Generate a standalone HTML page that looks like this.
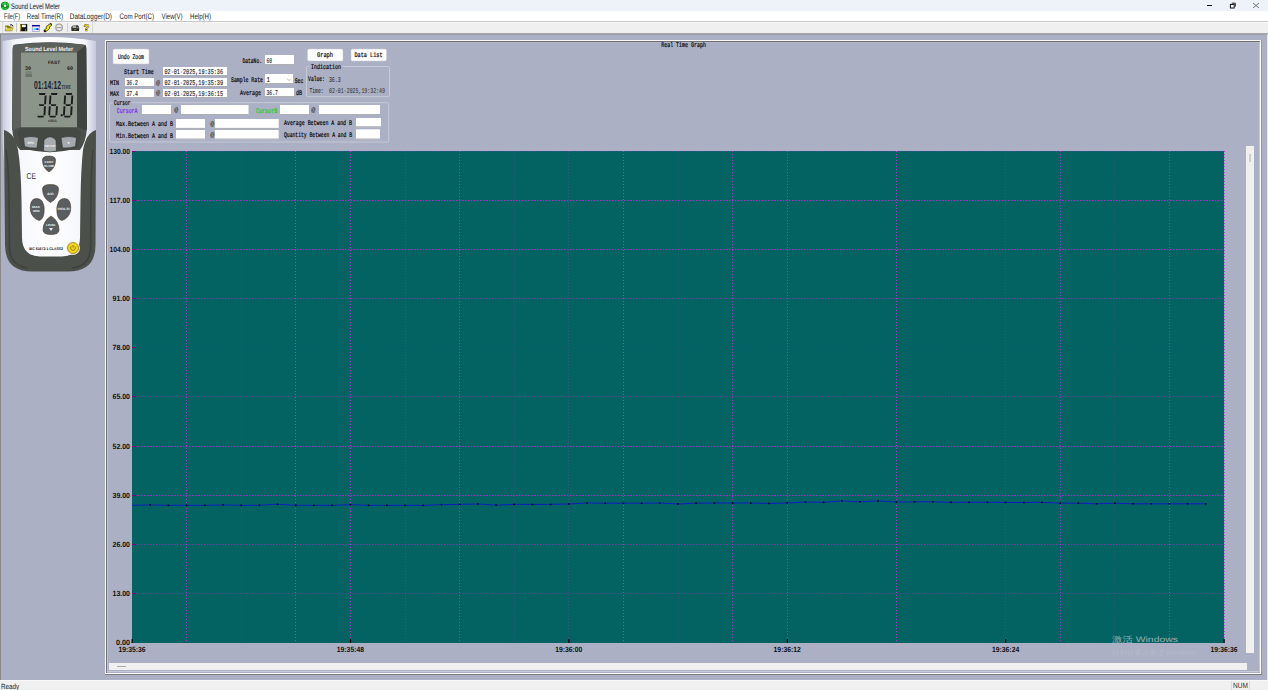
<!DOCTYPE html>
<html><head><meta charset="utf-8"><style>html,body{margin:0;padding:0;background:#abb0c4;overflow:hidden}svg{display:block}</style></head>
<body><svg width="1268" height="690" viewBox="0 0 1268 690" text-rendering="geometricPrecision">
<rect x="0" y="0" width="1268" height="11" fill="#eef2f9" />
<rect x="0" y="11" width="1268" height="10" fill="#ffffff" />
<rect x="0" y="21" width="1268" height="1" fill="#c8c8c8" />
<rect x="0" y="22" width="1268" height="1" fill="#f8f8f8" />
<rect x="0" y="23" width="1268" height="10" fill="#f0f0f0" />
<rect x="0" y="33" width="1268" height="1" fill="#a6a6a6" />
<rect x="0" y="34" width="1268" height="646" fill="#abb0c4" />
<rect x="0" y="34" width="1268" height="1" fill="#9ca0b2" />
<rect x="0" y="34" width="1" height="646" fill="#8a8a8a" />
<rect x="1267" y="34" width="1" height="646" fill="#e8e8ee" />
<rect x="0" y="680" width="1268" height="10" fill="#f0f0f0" />
<rect x="0" y="680" width="1268" height="1" fill="#f8f8f8" />
<g transform="translate(5,5.8)"><circle r="4.1" fill="#0c8a1c"/><path d="M-3 -1 A3.2 3.2 0 0 1 2.5 -2.2 L1.2 -0.3 L3.6 0.3 L3.4 -2.6" fill="#30e040"/><path d="M3 1.3 A3.2 3.2 0 0 1 -1.6 3.2 L-0.6 1.3 L-3.2 1.5 L-2.6 3.6" fill="#20d030"/><circle r="1.2" fill="#f0fff0"/></g>
<text x="11.00" y="8.68" font-family="Liberation Sans" font-size="8" font-weight="normal" fill="#111" textLength="49.00" lengthAdjust="spacingAndGlyphs" opacity="1" >Sound Level Meter</text>
<rect x="1207" y="5" width="5" height="1" fill="#111" />
<path d="M1231.8 3.2 L1235.3 3.2 L1235.3 6.6" stroke="#111" stroke-width="0.9" fill="none"/><rect x="1230.4" y="4.4" width="3.8" height="3.6" fill="#fff" stroke="#111" stroke-width="1"/>
<path d="M1253 3 L1259 8 M1259 3 L1253 8" stroke="#555" stroke-width="0.8"/>
<text x="4.00" y="19.08" font-family="Liberation Sans" font-size="8" font-weight="normal" fill="#222" textLength="16.00" lengthAdjust="spacingAndGlyphs" opacity="1" >File(F)</text>
<text x="26.70" y="19.08" font-family="Liberation Sans" font-size="8" font-weight="normal" fill="#222" textLength="36.30" lengthAdjust="spacingAndGlyphs" opacity="1" >Real Time(R)</text>
<text x="69.80" y="19.08" font-family="Liberation Sans" font-size="8" font-weight="normal" fill="#222" textLength="42.20" lengthAdjust="spacingAndGlyphs" opacity="1" >DataLogger(D)</text>
<text x="119.60" y="19.08" font-family="Liberation Sans" font-size="8" font-weight="normal" fill="#222" textLength="34.40" lengthAdjust="spacingAndGlyphs" opacity="1" >Com Port(C)</text>
<text x="161.60" y="19.08" font-family="Liberation Sans" font-size="8" font-weight="normal" fill="#222" textLength="21.00" lengthAdjust="spacingAndGlyphs" opacity="1" >View(V)</text>
<text x="190.00" y="19.08" font-family="Liberation Sans" font-size="8" font-weight="normal" fill="#222" textLength="21.00" lengthAdjust="spacingAndGlyphs" opacity="1" >Help(H)</text>
<rect x="2" y="22" width="1" height="11" fill="#dcdcdc" />
<rect x="16" y="23" width="1" height="9" fill="#c4c4c4" />
<rect x="67" y="23" width="1" height="9" fill="#d0d0d0" />
<rect x="92" y="22" width="1" height="11" fill="#d8d8d8" />
<path d="M5 25.5 L8.5 25.5 L9.5 26.5 L11.5 26.5 L11.5 30.8 L5 30.8 Z" fill="#7a7a00"/><path d="M6 27.8 L13.2 27.8 L11.8 31 L5.2 31 Z" fill="#d8d048" stroke="#606000" stroke-width="0.4"/><path d="M5.5 26 L7.5 28 L5.5 30 Z" fill="#f0f080"/><path d="M10 25 Q12.5 23.8 13 26.5" stroke="#111" stroke-width="0.9" fill="none"/>
<rect x="20" y="24" width="7.2" height="7.2" rx="0.5" fill="#101010"/><rect x="21.8" y="24.6" width="4" height="2.6" fill="#f4f4f4"/><rect x="20" y="24.3" width="1.1" height="6.5" fill="#a8a000"/><rect x="25" y="29.5" width="1" height="1" fill="#ddd"/>
<rect x="32.3" y="25.3" width="7.3" height="6.2" fill="#ece8f8" stroke="#a098d8" stroke-width="0.7"/><rect x="32" y="25" width="7.8" height="1.4" fill="#000090"/><rect x="33.6" y="28.2" width="2.6" height="1.8" fill="#20e8e8"/><rect x="36.2" y="28.2" width="2.4" height="1.8" fill="#1838f0"/>
<path d="M50.6 24.6 L47.2 27.4 L48.6 28 L45 30.8" stroke="#202000" stroke-width="2.8" fill="none" stroke-linejoin="round" stroke-linecap="round"/><path d="M50.6 24.6 L47.2 27.4 L48.6 28 L45.6 30.3" stroke="#f4f000" stroke-width="1.6" fill="none" stroke-linejoin="round"/>
<circle cx="59.1" cy="27.5" r="3.3" fill="none" stroke="#a4a4a4" stroke-width="1.3"/><rect x="56.6" y="26.9" width="5" height="1.3" fill="#a4a4a4"/>
<path d="M71.2 27.5 Q71.5 25.5 74 25.5 L78 25.2 Q79.2 26.5 79.2 28.5 L79 31 L71.5 31 Z" fill="#2c2c2c"/><rect x="72.5" y="25.5" width="3.6" height="2.6" fill="#a8a8a8"/><rect x="73.8" y="29.3" width="2.4" height="0.9" fill="#909020"/><rect x="76.5" y="26.8" width="2" height="1.4" fill="#888"/>
<text x="83.8" y="31.3" font-family="Liberation Sans" font-weight="bold" font-size="9.5" fill="#e8e000" stroke="#222" stroke-width="0.7" paint-order="stroke" textLength="5.5" lengthAdjust="spacingAndGlyphs">?</text>
<rect x="105" y="40" width="1157" height="1" fill="#f6f6f8" />
<rect x="105" y="40" width="1" height="635" fill="#ffffff" />
<rect x="106" y="41" width="1154" height="1" fill="#6e6e6e" />
<rect x="106" y="41" width="1" height="632" fill="#6e6e6e" />
<rect x="107" y="42" width="1152" height="1" fill="#b2b6c8" />
<rect x="107" y="42" width="1" height="630" fill="#c4c7d6" />
<rect x="1260" y="41" width="1" height="633" fill="#ffffff" />
<rect x="106" y="673" width="1155" height="1" fill="#ffffff" />
<rect x="1261" y="40" width="1" height="635" fill="#9496a2" />
<rect x="105" y="674" width="1157" height="1" fill="#7c7c82" />
<rect x="108" y="671" width="1151" height="1" fill="#c8cad8" />
<rect x="1259" y="42" width="1" height="630" fill="#c4c8d6" />
<text x="661.20" y="46.82" font-family="Liberation Mono" font-size="7" font-weight="normal" fill="#000" textLength="44.80" lengthAdjust="spacingAndGlyphs" opacity="1" stroke="#000" stroke-width="0.18">Real Time Graph</text>
<rect x="113" y="49" width="36" height="15" rx="1.5" fill="#fdfdfd" stroke="#c8c8d0" stroke-width="0.5"/>
<text x="118.00" y="58.72" font-family="Liberation Mono" font-size="7" font-weight="normal" fill="#000" textLength="26.00" lengthAdjust="spacingAndGlyphs" opacity="1" stroke="#000" stroke-width="0.18">Undo Zoom</text>
<rect x="307.5" y="49" width="35.5" height="12" rx="1.5" fill="#fdfdfd" stroke="#c8c8d0" stroke-width="0.5"/>
<text x="317.00" y="57.22" font-family="Liberation Mono" font-size="7" font-weight="normal" fill="#000" textLength="16.00" lengthAdjust="spacingAndGlyphs" opacity="1" stroke="#000" stroke-width="0.18">Graph</text>
<rect x="351" y="49" width="35.5" height="12" rx="1.5" fill="#fdfdfd" stroke="#c8c8d0" stroke-width="0.5"/>
<text x="354.50" y="57.22" font-family="Liberation Mono" font-size="7" font-weight="normal" fill="#000" textLength="28.00" lengthAdjust="spacingAndGlyphs" opacity="1" stroke="#000" stroke-width="0.18">Data List</text>
<rect x="265" y="55" width="29" height="10" fill="#ffffff"/>
<rect x="265" y="64.2" width="29" height="0.8" fill="#9a9aa0"/>
<text x="266.50" y="62.70" font-family="Liberation Mono" font-size="7.5" font-weight="normal" fill="#202020" textLength="5.50" lengthAdjust="spacingAndGlyphs" opacity="1" stroke="#303030" stroke-width="0.15">60</text>
<rect x="163" y="67" width="64" height="9" fill="#ffffff"/>
<rect x="163" y="75.2" width="64" height="0.8" fill="#9a9aa0"/>
<text x="164.50" y="74.20" font-family="Liberation Mono" font-size="7.5" font-weight="normal" fill="#202020" textLength="58.50" lengthAdjust="spacingAndGlyphs" opacity="1" stroke="#303030" stroke-width="0.15">02-01-2025,19:35:36</text>
<rect x="125" y="78" width="29" height="9" fill="#ffffff"/>
<rect x="125" y="86.2" width="29" height="0.8" fill="#9a9aa0"/>
<text x="126.50" y="85.20" font-family="Liberation Mono" font-size="7.5" font-weight="normal" fill="#202020" textLength="11.50" lengthAdjust="spacingAndGlyphs" opacity="1" stroke="#303030" stroke-width="0.15">36.2</text>
<rect x="163" y="78" width="64" height="9" fill="#ffffff"/>
<rect x="163" y="86.2" width="64" height="0.8" fill="#9a9aa0"/>
<text x="164.50" y="85.20" font-family="Liberation Mono" font-size="7.5" font-weight="normal" fill="#202020" textLength="58.50" lengthAdjust="spacingAndGlyphs" opacity="1" stroke="#303030" stroke-width="0.15">02-01-2025,19:35:39</text>
<rect x="125" y="89" width="29" height="9" fill="#ffffff"/>
<rect x="125" y="97.2" width="29" height="0.8" fill="#9a9aa0"/>
<text x="126.50" y="96.20" font-family="Liberation Mono" font-size="7.5" font-weight="normal" fill="#202020" textLength="11.50" lengthAdjust="spacingAndGlyphs" opacity="1" stroke="#303030" stroke-width="0.15">37.4</text>
<rect x="163" y="89" width="64" height="9" fill="#ffffff"/>
<rect x="163" y="97.2" width="64" height="0.8" fill="#9a9aa0"/>
<text x="164.50" y="96.20" font-family="Liberation Mono" font-size="7.5" font-weight="normal" fill="#202020" textLength="58.50" lengthAdjust="spacingAndGlyphs" opacity="1" stroke="#303030" stroke-width="0.15">02-01-2025,19:36:15</text>
<rect x="265" y="74" width="28" height="10" fill="#ffffff"/>
<rect x="265" y="83.2" width="28" height="0.8" fill="#9a9aa0"/>
<text x="266.50" y="81.70" font-family="Liberation Mono" font-size="7.5" font-weight="normal" fill="#202020" textLength="3.50" lengthAdjust="spacingAndGlyphs" opacity="1" stroke="#303030" stroke-width="0.15">1</text>
<path d="M287 78.6 L289 80.6 L291 78.6" stroke="#888" stroke-width="0.6" fill="none"/>
<rect x="265" y="88" width="29" height="9" fill="#ffffff"/>
<rect x="265" y="96.2" width="29" height="0.8" fill="#9a9aa0"/>
<text x="266.50" y="95.20" font-family="Liberation Mono" font-size="7.5" font-weight="normal" fill="#202020" textLength="11.50" lengthAdjust="spacingAndGlyphs" opacity="1" stroke="#303030" stroke-width="0.15">36.7</text>
<rect x="142" y="105" width="29" height="10" fill="#ffffff"/>
<rect x="142" y="114.2" width="29" height="0.8" fill="#9a9aa0"/>
<rect x="181" y="105" width="67.5" height="10" fill="#ffffff"/>
<rect x="181" y="114.2" width="67.5" height="0.8" fill="#9a9aa0"/>
<rect x="280" y="105" width="29" height="10" fill="#ffffff"/>
<rect x="280" y="114.2" width="29" height="0.8" fill="#9a9aa0"/>
<rect x="319" y="105" width="61" height="10" fill="#ffffff"/>
<rect x="319" y="114.2" width="61" height="0.8" fill="#9a9aa0"/>
<rect x="176" y="119" width="29" height="9.699999999999989" fill="#ffffff"/>
<rect x="176" y="127.89999999999999" width="29" height="0.8" fill="#9a9aa0"/>
<rect x="215" y="119" width="63.69999999999999" height="9.699999999999989" fill="#ffffff"/>
<rect x="215" y="127.89999999999999" width="63.69999999999999" height="0.8" fill="#9a9aa0"/>
<rect x="176" y="130" width="29" height="9.400000000000006" fill="#ffffff"/>
<rect x="176" y="138.6" width="29" height="0.8" fill="#9a9aa0"/>
<rect x="215" y="130" width="63.69999999999999" height="9.400000000000006" fill="#ffffff"/>
<rect x="215" y="138.6" width="63.69999999999999" height="0.8" fill="#9a9aa0"/>
<rect x="356" y="118" width="25" height="9.200000000000003" fill="#ffffff"/>
<rect x="356" y="126.4" width="25" height="0.8" fill="#9a9aa0"/>
<rect x="356" y="129.3" width="24" height="10.099999999999994" fill="#ffffff"/>
<rect x="356" y="138.6" width="24" height="0.8" fill="#9a9aa0"/>
<text x="124.00" y="74.32" font-family="Liberation Mono" font-size="7" font-weight="normal" fill="#000" textLength="29.70" lengthAdjust="spacingAndGlyphs" opacity="1" stroke="#000" stroke-width="0.18">Start Time</text>
<text x="110.00" y="85.32" font-family="Liberation Mono" font-size="7" font-weight="normal" fill="#000" textLength="9.00" lengthAdjust="spacingAndGlyphs" opacity="1" stroke="#000" stroke-width="0.18">MIN</text>
<text x="110.00" y="95.82" font-family="Liberation Mono" font-size="7" font-weight="normal" fill="#000" textLength="9.00" lengthAdjust="spacingAndGlyphs" opacity="1" stroke="#000" stroke-width="0.18">MAX</text>
<text x="156.00" y="85.14" font-family="Liberation Mono" font-size="6.5" font-weight="normal" fill="#222" textLength="4.00" lengthAdjust="spacingAndGlyphs" opacity="1" >@</text>
<text x="156.00" y="95.34" font-family="Liberation Mono" font-size="6.5" font-weight="normal" fill="#222" textLength="4.00" lengthAdjust="spacingAndGlyphs" opacity="1" >@</text>
<text x="242.40" y="62.52" font-family="Liberation Mono" font-size="7" font-weight="normal" fill="#000" textLength="19.60" lengthAdjust="spacingAndGlyphs" opacity="1" stroke="#000" stroke-width="0.18">DataNo.</text>
<text x="231.00" y="81.72" font-family="Liberation Mono" font-size="7" font-weight="normal" fill="#000" textLength="32.00" lengthAdjust="spacingAndGlyphs" opacity="1" stroke="#000" stroke-width="0.18">Sample Rate</text>
<text x="294.70" y="82.52" font-family="Liberation Mono" font-size="7" font-weight="normal" fill="#000" textLength="8.70" lengthAdjust="spacingAndGlyphs" opacity="1" stroke="#000" stroke-width="0.18">Sec</text>
<text x="240.00" y="94.72" font-family="Liberation Mono" font-size="7" font-weight="normal" fill="#000" textLength="21.00" lengthAdjust="spacingAndGlyphs" opacity="1" stroke="#000" stroke-width="0.18">Average</text>
<text x="296.00" y="94.52" font-family="Liberation Mono" font-size="7" font-weight="normal" fill="#000" textLength="6.00" lengthAdjust="spacingAndGlyphs" opacity="1" stroke="#000" stroke-width="0.18">dB</text>
<rect x="306.5" y="66.5" width="83.0" height="30.200000000000003" rx="1" fill="none" stroke="#cdd0dc" stroke-width="0.8"/>
<rect x="309.5" y="64.5" width="33" height="4" fill="#abb0c4" />
<text x="311.00" y="69.02" font-family="Liberation Mono" font-size="7" font-weight="normal" fill="#000" textLength="30.00" lengthAdjust="spacingAndGlyphs" opacity="1" stroke="#000" stroke-width="0.18">Indication</text>
<rect x="109.5" y="102.7" width="279.2" height="39.3" rx="1" fill="none" stroke="#cdd0dc" stroke-width="0.8"/>
<rect x="112.5" y="100.7" width="19.400000000000006" height="4" fill="#abb0c4" />
<text x="114.00" y="105.22" font-family="Liberation Mono" font-size="7" font-weight="normal" fill="#000" textLength="16.40" lengthAdjust="spacingAndGlyphs" opacity="1" stroke="#000" stroke-width="0.18">Cursor</text>
<text x="308.10" y="81.32" font-family="Liberation Mono" font-size="7" font-weight="normal" fill="#000" textLength="16.80" lengthAdjust="spacingAndGlyphs" opacity="1" stroke="#000" stroke-width="0.18">Value:</text>
<text x="328.90" y="81.50" font-family="Liberation Mono" font-size="7.5" font-weight="normal" fill="#202020" textLength="11.70" lengthAdjust="spacingAndGlyphs" opacity="1" >36.3</text>
<text x="309.50" y="93.00" font-family="Liberation Mono" font-size="7.5" font-weight="normal" fill="#202020" textLength="14.00" lengthAdjust="spacingAndGlyphs" opacity="1" >Time:</text>
<text x="329.00" y="93.00" font-family="Liberation Mono" font-size="7.5" font-weight="normal" fill="#303030" textLength="56.00" lengthAdjust="spacingAndGlyphs" opacity="1" >02-01-2025,19:32:49</text>
<text x="116.80" y="112.92" font-family="Liberation Mono" font-size="7" font-weight="normal" fill="#7a1cf0" textLength="20.70" lengthAdjust="spacingAndGlyphs" opacity="1" stroke="#7a1cf0" stroke-width="0.18">CursorA</text>
<text x="174.20" y="111.94" font-family="Liberation Mono" font-size="6.5" font-weight="normal" fill="#222" textLength="4.00" lengthAdjust="spacingAndGlyphs" opacity="1" >@</text>
<text x="256.00" y="112.92" font-family="Liberation Mono" font-size="7" font-weight="normal" fill="#10d010" textLength="21.20" lengthAdjust="spacingAndGlyphs" opacity="1" stroke="#10d010" stroke-width="0.18">CursorB</text>
<text x="311.20" y="111.94" font-family="Liberation Mono" font-size="6.5" font-weight="normal" fill="#222" textLength="4.20" lengthAdjust="spacingAndGlyphs" opacity="1" >@</text>
<text x="116.00" y="126.22" font-family="Liberation Mono" font-size="7" font-weight="normal" fill="#000" textLength="57.00" lengthAdjust="spacingAndGlyphs" opacity="1" stroke="#000" stroke-width="0.18">Max.Between A and B</text>
<text x="210.30" y="125.54" font-family="Liberation Mono" font-size="6.5" font-weight="normal" fill="#222" textLength="4.00" lengthAdjust="spacingAndGlyphs" opacity="1" >@</text>
<text x="116.00" y="137.72" font-family="Liberation Mono" font-size="7" font-weight="normal" fill="#000" textLength="57.00" lengthAdjust="spacingAndGlyphs" opacity="1" stroke="#000" stroke-width="0.18">Min.Between A and B</text>
<text x="210.30" y="136.74" font-family="Liberation Mono" font-size="6.5" font-weight="normal" fill="#222" textLength="4.00" lengthAdjust="spacingAndGlyphs" opacity="1" >@</text>
<text x="284.00" y="124.72" font-family="Liberation Mono" font-size="7" font-weight="normal" fill="#000" textLength="68.00" lengthAdjust="spacingAndGlyphs" opacity="1" stroke="#000" stroke-width="0.18">Average Between A and B</text>
<text x="284.00" y="136.52" font-family="Liberation Mono" font-size="7" font-weight="normal" fill="#000" textLength="68.00" lengthAdjust="spacingAndGlyphs" opacity="1" stroke="#000" stroke-width="0.18">Quantity Between A and B</text>
<rect x="132" y="151" width="1092" height="492" fill="#036262" />
<line x1="132" y1="151.5" x2="1224" y2="151.5" stroke="#b830d8" stroke-width="1" stroke-dasharray="1.5 1.5" opacity="0.32"/>
<line x1="132" y1="151.5" x2="136" y2="151.5" stroke="#800080" stroke-width="1"/>
<text x="109.50" y="154.00" font-family="Liberation Sans" font-size="7.5" font-weight="bold" fill="#111" textLength="20.50" lengthAdjust="spacingAndGlyphs" opacity="1" >130.00</text>
<line x1="132" y1="200.5" x2="1224" y2="200.5" stroke="#b830d8" stroke-width="1" stroke-dasharray="1.5 1.5" opacity="0.90"/>
<line x1="132" y1="200.5" x2="136" y2="200.5" stroke="#800080" stroke-width="1"/>
<text x="109.50" y="203.00" font-family="Liberation Sans" font-size="7.5" font-weight="bold" fill="#111" textLength="20.50" lengthAdjust="spacingAndGlyphs" opacity="1" >117.00</text>
<line x1="132" y1="249.5" x2="1224" y2="249.5" stroke="#b830d8" stroke-width="1" stroke-dasharray="1.5 1.5" opacity="0.85"/>
<line x1="132" y1="249.5" x2="136" y2="249.5" stroke="#800080" stroke-width="1"/>
<text x="109.50" y="252.00" font-family="Liberation Sans" font-size="7.5" font-weight="bold" fill="#111" textLength="20.50" lengthAdjust="spacingAndGlyphs" opacity="1" >104.00</text>
<line x1="132" y1="298.5" x2="1224" y2="298.5" stroke="#b830d8" stroke-width="1" stroke-dasharray="1.5 1.5" opacity="0.54"/>
<line x1="132" y1="298.5" x2="136" y2="298.5" stroke="#800080" stroke-width="1"/>
<text x="112.50" y="301.00" font-family="Liberation Sans" font-size="7.5" font-weight="bold" fill="#111" textLength="17.50" lengthAdjust="spacingAndGlyphs" opacity="1" >91.00</text>
<line x1="132" y1="347.5" x2="1224" y2="347.5" stroke="#b830d8" stroke-width="1" stroke-dasharray="1.5 1.5" opacity="0.04"/>
<line x1="132" y1="347.5" x2="136" y2="347.5" stroke="#800080" stroke-width="1"/>
<text x="112.50" y="350.00" font-family="Liberation Sans" font-size="7.5" font-weight="bold" fill="#111" textLength="17.50" lengthAdjust="spacingAndGlyphs" opacity="1" >78.00</text>
<line x1="132" y1="396.5" x2="1224" y2="396.5" stroke="#b830d8" stroke-width="1" stroke-dasharray="1.5 1.5" opacity="0.45"/>
<line x1="132" y1="396.5" x2="136" y2="396.5" stroke="#800080" stroke-width="1"/>
<text x="112.50" y="399.00" font-family="Liberation Sans" font-size="7.5" font-weight="bold" fill="#111" textLength="17.50" lengthAdjust="spacingAndGlyphs" opacity="1" >65.00</text>
<line x1="132" y1="446.5" x2="1224" y2="446.5" stroke="#b830d8" stroke-width="1" stroke-dasharray="1.5 1.5" opacity="0.85"/>
<line x1="132" y1="446.5" x2="136" y2="446.5" stroke="#800080" stroke-width="1"/>
<text x="112.50" y="449.00" font-family="Liberation Sans" font-size="7.5" font-weight="bold" fill="#111" textLength="17.50" lengthAdjust="spacingAndGlyphs" opacity="1" >52.00</text>
<line x1="132" y1="495.5" x2="1224" y2="495.5" stroke="#b830d8" stroke-width="1" stroke-dasharray="1.5 1.5" opacity="0.85"/>
<line x1="132" y1="495.5" x2="136" y2="495.5" stroke="#800080" stroke-width="1"/>
<text x="112.50" y="498.00" font-family="Liberation Sans" font-size="7.5" font-weight="bold" fill="#111" textLength="17.50" lengthAdjust="spacingAndGlyphs" opacity="1" >39.00</text>
<line x1="132" y1="544.5" x2="1224" y2="544.5" stroke="#b830d8" stroke-width="1" stroke-dasharray="1.5 1.5" opacity="0.54"/>
<line x1="132" y1="544.5" x2="136" y2="544.5" stroke="#800080" stroke-width="1"/>
<text x="112.50" y="547.00" font-family="Liberation Sans" font-size="7.5" font-weight="bold" fill="#111" textLength="17.50" lengthAdjust="spacingAndGlyphs" opacity="1" >26.00</text>
<line x1="132" y1="593.5" x2="1224" y2="593.5" stroke="#b830d8" stroke-width="1" stroke-dasharray="1.5 1.5" opacity="0.36"/>
<line x1="132" y1="593.5" x2="136" y2="593.5" stroke="#800080" stroke-width="1"/>
<text x="112.50" y="596.00" font-family="Liberation Sans" font-size="7.5" font-weight="bold" fill="#111" textLength="17.50" lengthAdjust="spacingAndGlyphs" opacity="1" >13.00</text>
<text x="116.00" y="645.00" font-family="Liberation Sans" font-size="7.5" font-weight="bold" fill="#111" textLength="14.00" lengthAdjust="spacingAndGlyphs" opacity="1" >0.00</text>
<line x1="186.5" y1="151" x2="186.5" y2="642" stroke="#d02ce8" stroke-width="1" stroke-dasharray="1 2" opacity="0.90"/>
<line x1="241.5" y1="151" x2="241.5" y2="642" stroke="#d02ce8" stroke-width="1" stroke-dasharray="1 2" opacity="0.20"/>
<line x1="295.5" y1="151" x2="295.5" y2="642" stroke="#d02ce8" stroke-width="1" stroke-dasharray="1 2" opacity="0.90"/>
<line x1="350.5" y1="151" x2="350.5" y2="642" stroke="#d02ce8" stroke-width="1" stroke-dasharray="1 2" opacity="0.85"/>
<line x1="405.5" y1="151" x2="405.5" y2="642" stroke="#d02ce8" stroke-width="1" stroke-dasharray="1 2" opacity="0.32"/>
<line x1="459.5" y1="151" x2="459.5" y2="642" stroke="#d02ce8" stroke-width="1" stroke-dasharray="1 2" opacity="0.81"/>
<line x1="514.5" y1="151" x2="514.5" y2="642" stroke="#d02ce8" stroke-width="1" stroke-dasharray="1 2" opacity="0.23"/>
<line x1="568.5" y1="151" x2="568.5" y2="642" stroke="#d02ce8" stroke-width="1" stroke-dasharray="1 2" opacity="0.27"/>
<line x1="623.5" y1="151" x2="623.5" y2="642" stroke="#d02ce8" stroke-width="1" stroke-dasharray="1 2" opacity="0.85"/>
<line x1="678.5" y1="151" x2="678.5" y2="642" stroke="#d02ce8" stroke-width="1" stroke-dasharray="1 2" opacity="0.18"/>
<line x1="732.5" y1="151" x2="732.5" y2="642" stroke="#d02ce8" stroke-width="1" stroke-dasharray="1 2" opacity="0.77"/>
<line x1="787.5" y1="151" x2="787.5" y2="642" stroke="#d02ce8" stroke-width="1" stroke-dasharray="1 2" opacity="0.77"/>
<line x1="841.5" y1="151" x2="841.5" y2="642" stroke="#d02ce8" stroke-width="1" stroke-dasharray="1 2" opacity="0.11"/>
<line x1="896.5" y1="151" x2="896.5" y2="642" stroke="#d02ce8" stroke-width="1" stroke-dasharray="1 2" opacity="0.90"/>
<line x1="951.5" y1="151" x2="951.5" y2="642" stroke="#d02ce8" stroke-width="1" stroke-dasharray="1 2" opacity="0.05"/>
<line x1="1005.5" y1="151" x2="1005.5" y2="642" stroke="#d02ce8" stroke-width="1" stroke-dasharray="1 2" opacity="0.25"/>
<line x1="1060.5" y1="151" x2="1060.5" y2="642" stroke="#d02ce8" stroke-width="1" stroke-dasharray="1 2" opacity="0.77"/>
<line x1="1114.5" y1="151" x2="1114.5" y2="642" stroke="#d02ce8" stroke-width="1" stroke-dasharray="1 2" opacity="0.18"/>
<line x1="1169.5" y1="151" x2="1169.5" y2="642" stroke="#d02ce8" stroke-width="1" stroke-dasharray="1 2" opacity="0.77"/>
<line x1="1224.5" y1="151" x2="1224.5" y2="642" stroke="#d02ce8" stroke-width="1" stroke-dasharray="1 2" opacity="0.90"/>
<rect x="131.5" y="639" width="1.2" height="4" fill="#000"/>
<text x="118.40" y="652.00" font-family="Liberation Sans" font-size="7.5" font-weight="bold" fill="#111" textLength="27.20" lengthAdjust="spacingAndGlyphs" opacity="1" >19:35:36</text>
<rect x="349.9" y="639" width="1.2" height="4" fill="#000"/>
<text x="336.80" y="652.00" font-family="Liberation Sans" font-size="7.5" font-weight="bold" fill="#111" textLength="27.20" lengthAdjust="spacingAndGlyphs" opacity="1" >19:35:48</text>
<rect x="568.3" y="639" width="1.2" height="4" fill="#000"/>
<text x="555.20" y="652.00" font-family="Liberation Sans" font-size="7.5" font-weight="bold" fill="#111" textLength="27.20" lengthAdjust="spacingAndGlyphs" opacity="1" >19:36:00</text>
<rect x="786.7" y="639" width="1.2" height="4" fill="#000"/>
<text x="773.60" y="652.00" font-family="Liberation Sans" font-size="7.5" font-weight="bold" fill="#111" textLength="27.20" lengthAdjust="spacingAndGlyphs" opacity="1" >19:36:12</text>
<rect x="1005.1" y="639" width="1.2" height="4" fill="#000"/>
<text x="992.00" y="652.00" font-family="Liberation Sans" font-size="7.5" font-weight="bold" fill="#111" textLength="27.20" lengthAdjust="spacingAndGlyphs" opacity="1" >19:36:24</text>
<rect x="1223.5" y="639" width="1.2" height="4" fill="#000"/>
<text x="1210.40" y="652.00" font-family="Liberation Sans" font-size="7.5" font-weight="bold" fill="#111" textLength="27.20" lengthAdjust="spacingAndGlyphs" opacity="1" >19:36:36</text>
<path d="M132.0 505.3 L150.2 504.9 L168.4 505.3 L186.6 505.3 L204.8 505.3 L223.0 504.9 L241.2 505.3 L259.4 505.3 L277.6 504.2 L295.8 505.3 L314.0 505.3 L332.2 505.3 L350.4 504.7 L368.6 505.3 L386.8 505.3 L405.0 505.3 L423.2 505.4 L441.4 504.7 L459.6 504.4 L477.8 504.0 L496.0 505.1 L514.2 504.4 L532.4 504.4 L550.6 504.4 L568.8 504.0 L587.0 503.0 L605.2 503.2 L623.4 503.2 L641.6 503.2 L659.8 503.0 L678.0 504.0 L696.2 503.2 L714.4 503.0 L732.6 503.0 L750.8 503.0 L769.0 503.5 L787.2 503.0 L805.4 502.0 L823.6 502.3 L841.8 500.9 L860.0 501.8 L878.2 500.9 L896.4 502.0 L914.6 501.8 L932.8 501.8 L951.0 502.3 L969.2 502.3 L987.4 502.3 L1005.6 502.4 L1023.8 502.5 L1042.0 502.3 L1060.2 503.2 L1078.4 503.2 L1096.6 503.8 L1114.8 503.2 L1133.0 503.8 L1151.2 503.8 L1169.4 503.8 L1187.6 503.8 L1205.8 503.8" stroke="#0a20c0" stroke-width="1.0" fill="none"/>
<rect x="149.4" y="504.1" width="1.6" height="1.6" fill="#000" opacity="0.9"/>
<rect x="167.6" y="504.5" width="1.6" height="1.6" fill="#000" opacity="0.9"/>
<rect x="185.8" y="504.5" width="1.6" height="1.6" fill="#000" opacity="0.9"/>
<rect x="204.0" y="504.5" width="1.6" height="1.6" fill="#000" opacity="0.9"/>
<rect x="222.2" y="504.1" width="1.6" height="1.6" fill="#000" opacity="0.9"/>
<rect x="240.4" y="504.5" width="1.6" height="1.6" fill="#000" opacity="0.9"/>
<rect x="258.6" y="504.5" width="1.6" height="1.6" fill="#000" opacity="0.9"/>
<rect x="276.8" y="503.4" width="1.6" height="1.6" fill="#000" opacity="0.9"/>
<rect x="295.0" y="504.5" width="1.6" height="1.6" fill="#000" opacity="0.9"/>
<rect x="313.2" y="504.5" width="1.6" height="1.6" fill="#000" opacity="0.9"/>
<rect x="331.4" y="504.5" width="1.6" height="1.6" fill="#000" opacity="0.9"/>
<rect x="349.6" y="503.9" width="1.6" height="1.6" fill="#000" opacity="0.9"/>
<rect x="367.8" y="504.5" width="1.6" height="1.6" fill="#000" opacity="0.9"/>
<rect x="386.0" y="504.5" width="1.6" height="1.6" fill="#000" opacity="0.9"/>
<rect x="404.2" y="504.5" width="1.6" height="1.6" fill="#000" opacity="0.9"/>
<rect x="422.4" y="504.6" width="1.6" height="1.6" fill="#000" opacity="0.9"/>
<rect x="440.6" y="503.9" width="1.6" height="1.6" fill="#000" opacity="0.9"/>
<rect x="458.8" y="503.6" width="1.6" height="1.6" fill="#000" opacity="0.9"/>
<rect x="477.0" y="503.2" width="1.6" height="1.6" fill="#000" opacity="0.9"/>
<rect x="495.2" y="504.3" width="1.6" height="1.6" fill="#000" opacity="0.9"/>
<rect x="513.4" y="503.6" width="1.6" height="1.6" fill="#000" opacity="0.9"/>
<rect x="531.6" y="503.6" width="1.6" height="1.6" fill="#000" opacity="0.9"/>
<rect x="549.8" y="503.6" width="1.6" height="1.6" fill="#000" opacity="0.9"/>
<rect x="568.0" y="503.2" width="1.6" height="1.6" fill="#000" opacity="0.9"/>
<rect x="586.2" y="502.2" width="1.6" height="1.6" fill="#000" opacity="0.9"/>
<rect x="604.4" y="502.4" width="1.6" height="1.6" fill="#000" opacity="0.9"/>
<rect x="622.6" y="502.4" width="1.6" height="1.6" fill="#000" opacity="0.9"/>
<rect x="640.8" y="502.4" width="1.6" height="1.6" fill="#000" opacity="0.9"/>
<rect x="659.0" y="502.2" width="1.6" height="1.6" fill="#000" opacity="0.9"/>
<rect x="677.2" y="503.2" width="1.6" height="1.6" fill="#000" opacity="0.9"/>
<rect x="695.4" y="502.4" width="1.6" height="1.6" fill="#000" opacity="0.9"/>
<rect x="713.6" y="502.2" width="1.6" height="1.6" fill="#000" opacity="0.9"/>
<rect x="731.8" y="502.2" width="1.6" height="1.6" fill="#000" opacity="0.9"/>
<rect x="750.0" y="502.2" width="1.6" height="1.6" fill="#000" opacity="0.9"/>
<rect x="768.2" y="502.7" width="1.6" height="1.6" fill="#000" opacity="0.9"/>
<rect x="786.4" y="502.2" width="1.6" height="1.6" fill="#000" opacity="0.9"/>
<rect x="804.6" y="501.2" width="1.6" height="1.6" fill="#000" opacity="0.9"/>
<rect x="822.8" y="501.5" width="1.6" height="1.6" fill="#000" opacity="0.9"/>
<rect x="841.0" y="500.1" width="1.6" height="1.6" fill="#000" opacity="0.9"/>
<rect x="859.2" y="501.0" width="1.6" height="1.6" fill="#000" opacity="0.9"/>
<rect x="877.4" y="500.1" width="1.6" height="1.6" fill="#000" opacity="0.9"/>
<rect x="895.6" y="501.2" width="1.6" height="1.6" fill="#000" opacity="0.9"/>
<rect x="913.8" y="501.0" width="1.6" height="1.6" fill="#000" opacity="0.9"/>
<rect x="932.0" y="501.0" width="1.6" height="1.6" fill="#000" opacity="0.9"/>
<rect x="950.2" y="501.5" width="1.6" height="1.6" fill="#000" opacity="0.9"/>
<rect x="968.4" y="501.5" width="1.6" height="1.6" fill="#000" opacity="0.9"/>
<rect x="986.6" y="501.5" width="1.6" height="1.6" fill="#000" opacity="0.9"/>
<rect x="1004.8" y="501.6" width="1.6" height="1.6" fill="#000" opacity="0.9"/>
<rect x="1023.0" y="501.7" width="1.6" height="1.6" fill="#000" opacity="0.9"/>
<rect x="1041.2" y="501.5" width="1.6" height="1.6" fill="#000" opacity="0.9"/>
<rect x="1059.4" y="502.4" width="1.6" height="1.6" fill="#000" opacity="0.9"/>
<rect x="1077.6" y="502.4" width="1.6" height="1.6" fill="#000" opacity="0.9"/>
<rect x="1095.8" y="503.0" width="1.6" height="1.6" fill="#000" opacity="0.9"/>
<rect x="1114.0" y="502.4" width="1.6" height="1.6" fill="#000" opacity="0.9"/>
<rect x="1132.2" y="503.0" width="1.6" height="1.6" fill="#000" opacity="0.9"/>
<rect x="1150.4" y="503.0" width="1.6" height="1.6" fill="#000" opacity="0.9"/>
<rect x="1168.6" y="503.0" width="1.6" height="1.6" fill="#000" opacity="0.9"/>
<rect x="1186.8" y="503.0" width="1.6" height="1.6" fill="#000" opacity="0.9"/>
<rect x="1205.0" y="503.0" width="1.6" height="1.6" fill="#000" opacity="0.9"/>
<rect x="1246" y="146" width="8" height="507" fill="#f0f0f0" />
<rect x="1249.6" y="154" width="0.8" height="8" fill="#9a9a9a" />
<rect x="109" y="663" width="1138" height="7" fill="#f0f0f0" />
<rect x="117" y="666" width="9" height="0.8" fill="#9a9a9a" />
<text x="1112.00" y="642.38" font-family="Liberation Sans" font-size="8" font-weight="normal" fill="#c8c8c8" textLength="66.00" lengthAdjust="spacingAndGlyphs" opacity="0.75" >激活 Windows</text>
<text x="1112.00" y="654.82" font-family="Liberation Sans" font-size="7" font-weight="normal" fill="#c0c2cc" textLength="91.00" lengthAdjust="spacingAndGlyphs" opacity="0.6" >转到设置以激活 Windows。</text>
<text x="1.00" y="688.90" font-family="Liberation Sans" font-size="7.5" font-weight="normal" fill="#222" textLength="18.00" lengthAdjust="spacingAndGlyphs" opacity="1" >Ready</text>
<rect x="1231" y="681" width="0.8" height="9" fill="#d8d8d8" />
<rect x="1249" y="681" width="0.8" height="9" fill="#d8d8d8" />
<text x="1233.00" y="688.30" font-family="Liberation Sans" font-size="7.5" font-weight="normal" fill="#333" textLength="15.00" lengthAdjust="spacingAndGlyphs" opacity="1" >NUM</text>
<defs>
<linearGradient id="bodyG" x1="0" x2="1" y1="0" y2="0">
<stop offset="0" stop-color="#c8cce0"/><stop offset="0.12" stop-color="#f4f6fb"/><stop offset="0.5" stop-color="#ffffff"/><stop offset="0.88" stop-color="#f4f6fb"/><stop offset="1" stop-color="#c4c8dc"/>
</linearGradient>
<linearGradient id="gripG" x1="0" x2="1" y1="0" y2="0">
<stop offset="0" stop-color="#3c403c"/><stop offset="0.5" stop-color="#5a5e5a"/><stop offset="1" stop-color="#3c403c"/>
</linearGradient>
</defs>
<g>
<!-- white body -->
<path d="M2.5 41 Q49 33 96 41 L96 140 Q96 150 95 170 L95 245 Q95 271 68 271 L32 271 Q5 271 5 245 L5 170 Q3 150 2.5 140 Z" fill="url(#bodyG)"/>
<!-- dark grip outline lower -->
<path d="M4 130 Q15 133 18 150 Q21 168 21.5 200 L22 238 Q22.5 256 40 256.5 L62 256.5 Q79.5 256 80 238 L80.5 200 Q81 168 83 150 Q86 133 96 130 L95.5 245 Q95.5 271.5 68 271.5 L32 271.5 Q5 271.5 5 245 Z" fill="#4b504b"/>
<path d="M6 150 Q9 170 9 200 L9.5 248 Q10 266 28 268" stroke="#2f332f" stroke-width="1.5" fill="none" opacity="0.5"/>
<path d="M93 150 Q91 170 91 200 L90.5 248 Q90 266 72 268" stroke="#2f332f" stroke-width="1.5" fill="none" opacity="0.5"/>
<!-- bezel -->
<path d="M16 44.5 Q49.5 40 83 44.5 Q86.5 45 86.5 49 L87 128 Q86 142 80 150 L20 150 Q13 142 12 128 L12.5 49 Q12.5 45 16 44.5 Z" fill="#4b504c"/>
<!-- bevel -->
<path d="M13 45 L21 52.5 L77 52.5 L86 45 Q49.5 40 13 45 Z" fill="#5b605c"/>
<path d="M13 45 L21 52.5 L21 127 L12.5 130 Z" fill="#5c615d"/>
<path d="M86 45 L77 52.5 L77 127 L87 130 Z" fill="#3f4440"/>
<!-- LCD -->
<rect x="21" y="52.5" width="56" height="75" fill="#8b9589"/>
<text x="25" y="50.6" font-family="Liberation Sans" font-weight="bold" font-size="6" fill="#f0f0f0" textLength="48" lengthAdjust="spacingAndGlyphs">Sound Level Meter</text>
<text x="48" y="64" font-family="Liberation Sans" font-weight="bold" font-size="4.8" fill="#222" textLength="12" lengthAdjust="spacingAndGlyphs">FAST</text>
<text x="25" y="69.5" font-family="Liberation Mono" font-weight="bold" font-size="5.5" fill="#1a1a1a" textLength="6" lengthAdjust="spacingAndGlyphs">30</text>
<text x="67" y="69.5" font-family="Liberation Mono" font-weight="bold" font-size="5.5" fill="#1a1a1a" textLength="6" lengthAdjust="spacingAndGlyphs">60</text>
<rect x="25.5" y="71" width="6" height="3" fill="#7a8479"/>
<rect x="25.5" y="74" width="6.5" height="3" fill="#6a7469"/>
<text x="34" y="89.3" font-family="Liberation Sans" font-weight="bold" font-size="11.6" fill="#1a2230" textLength="27" lengthAdjust="spacingAndGlyphs">01:14:12</text>
<text x="61.5" y="89.2" font-family="Liberation Serif" font-weight="bold" font-size="6" fill="#2a3040" textLength="9.5" lengthAdjust="spacingAndGlyphs">TIME</text>
<!-- 36.8 seven seg -->
<path d="M38.80 93.10 L45.60 93.10 L44.90 94.90 L39.50 94.90 Z M38.73 104.30 L44.33 104.30 L43.63 106.10 L39.43 106.10 Z M37.24 115.70 L44.04 115.70 L43.34 117.50 L37.94 117.50 Z M44.67 95.40 L46.57 95.40 L46.04 104.20 L44.14 104.20 Z M44.02 106.20 L45.92 106.20 L45.37 115.30 L43.47 115.30 Z M50.80 93.10 L57.60 93.10 L56.90 94.90 L51.50 94.90 Z M50.73 104.30 L56.33 104.30 L55.63 106.10 L51.43 106.10 Z M49.24 115.70 L56.04 115.70 L55.34 117.50 L49.94 117.50 Z M49.47 95.40 L51.37 95.40 L50.84 104.20 L48.94 104.20 Z M48.82 106.20 L50.72 106.20 L50.17 115.30 L48.27 115.30 Z M56.02 106.20 L57.92 106.20 L57.37 115.30 L55.47 115.30 Z M65.50 93.10 L72.30 93.10 L71.60 94.90 L66.20 94.90 Z M65.43 104.30 L71.03 104.30 L70.33 106.10 L66.13 106.10 Z M63.94 115.70 L70.74 115.70 L70.04 117.50 L64.64 117.50 Z M64.17 95.40 L66.07 95.40 L65.54 104.20 L63.64 104.20 Z M71.37 95.40 L73.27 95.40 L72.74 104.20 L70.84 104.20 Z M63.52 106.20 L65.42 106.20 L64.87 115.30 L62.97 115.30 Z M70.72 106.20 L72.62 106.20 L72.07 115.30 L70.17 115.30 Z" fill="#1c1c1c"/>
<rect x="60.8" y="114.3" width="1.9" height="1.9" fill="#111"/>
<text x="48" y="122.2" font-family="Liberation Sans" font-weight="bold" font-size="3.6" fill="#444" textLength="9" lengthAdjust="spacingAndGlyphs">dBA</text>
<!-- lower bezel -->
<path d="M21 127.5 L77 127.5 L81 133 L78 148 Q50 156 21 148 L17 133 Z" fill="#444944"/>
<path d="M23.5 137.5 Q31 135.5 38.5 137.5 L37 148 Q30 148.5 24.5 146.5 Z" fill="#a4a9ad" stroke="#2a2e2a" stroke-width="0.6"/>
<path d="M61 137.5 Q69 135.5 76.5 137.5 L75.5 146.5 Q69 148.5 62.5 148 Z" fill="#a4a9ad" stroke="#2a2e2a" stroke-width="0.6"/>
<path d="M44 140 Q50 133.5 56 140 L56.5 151 Q50 153 43.5 151 Z" fill="#a8adb1" stroke="#2a2e2a" stroke-width="0.6"/>
<text x="27.5" y="143.7" font-family="Liberation Sans" font-weight="bold" font-size="3.2" fill="#f4f4f4" textLength="7" lengthAdjust="spacingAndGlyphs">REC</text>
<text x="44.5" y="146.5" font-family="Liberation Sans" font-weight="bold" font-size="3" fill="#f4f4f4" textLength="11" lengthAdjust="spacingAndGlyphs">SETUP</text>
<text x="67.5" y="144" font-family="Liberation Sans" font-weight="bold" font-size="4" fill="#f4f4f4">▾</text>
<!-- white buttons area buttons -->
<g fill="#5a5e60" stroke="#4a3a2a" stroke-width="0.6">
<path d="M42.5 160 Q42.5 156 49 156 Q55.5 156 55.5 160 Q55.5 168 49 172 Q42.5 168 42.5 160 Z"/>
<path d="M42.5 189 Q42.5 184.5 50.5 184.5 Q58.5 184.5 58.5 189 Q58.5 198 50.5 202.5 Q42.5 198 42.5 189 Z"/>
<path d="M33 199.5 Q38 197 42 201 Q45 206 44 213 Q43 220 39 220.5 Q32 218 30.5 211 Q29.5 203 33 199.5 Z"/>
<path d="M68 199.5 Q63 197 59 201 Q56 206 57 213 Q58 220 62 220.5 Q69 218 70.5 211 Q71.5 203 68 199.5 Z"/>
<path d="M43 230 Q43 234.5 51 234.5 Q59 234.5 59 230 Q59 221 51 216 Q43 221 43 230 Z"/>
</g>
<g font-family="Liberation Sans" font-weight="bold" fill="#f4f4f4">
<text x="44.5" y="163" font-size="3" textLength="9" lengthAdjust="spacingAndGlyphs">FAST</text>
<text x="44" y="167.3" font-size="3" textLength="10" lengthAdjust="spacingAndGlyphs">SLOW</text>
<text x="47" y="194.5" font-size="3.2" textLength="7" lengthAdjust="spacingAndGlyphs">A/C</text>
<text x="32" y="207.5" font-size="3" textLength="8" lengthAdjust="spacingAndGlyphs">MAX</text>
<text x="33" y="211.5" font-size="3" textLength="6.5" lengthAdjust="spacingAndGlyphs">MIN</text>
<text x="57.5" y="210" font-size="3.2" textLength="12" lengthAdjust="spacingAndGlyphs">HOLD</text>
<text x="46" y="226" font-size="3" textLength="10" lengthAdjust="spacingAndGlyphs">LEVEL</text>
</g>
<path d="M49 228 L53 228 L51 231 Z" fill="#e8e8e8"/>
<text x="26.5" y="179" font-family="Liberation Sans" font-size="8.5" fill="#333" textLength="9.5" lengthAdjust="spacingAndGlyphs">CE</text>
<text x="29" y="249.5" font-family="Liberation Sans" font-weight="bold" font-size="3.8" fill="#111" textLength="34" lengthAdjust="spacingAndGlyphs">IEC 61672-1 CLASS2</text>
<circle cx="73" cy="248" r="7" fill="#f7eef0" opacity="0.9"/>
<circle cx="73" cy="248" r="5.5" fill="#f2d818" stroke="#a08010" stroke-width="0.8"/>
<path d="M71.3 246.3 A2.4 2.4 0 1 0 74.7 246.3 M73 245 L73 247.6" stroke="#7a5a10" stroke-width="0.7" fill="none"/>
</g>

</svg></body></html>
